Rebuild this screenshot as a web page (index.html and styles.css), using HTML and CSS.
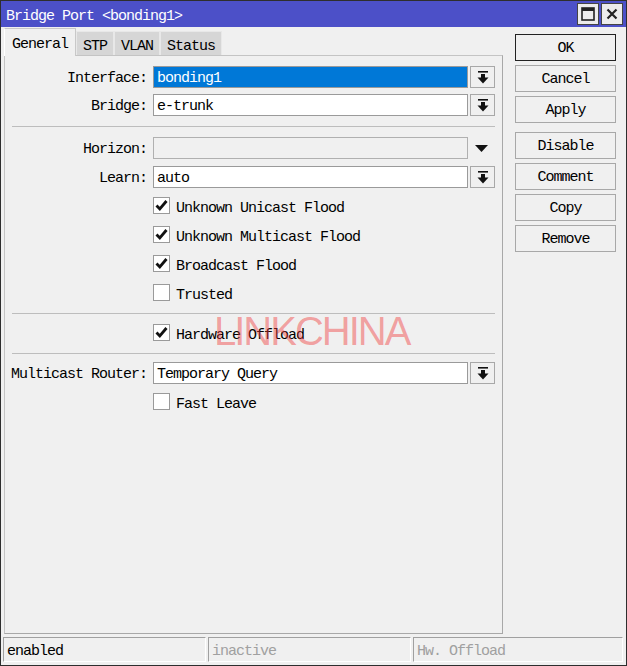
FILE: index.html
```html
<!DOCTYPE html>
<html>
<head>
<meta charset="utf-8">
<link rel="stylesheet" href="styles.css">
</head>
<body>
<div class="window">
  <div class="titlebar">
    <span class="title">Bridge Port &lt;bonding1&gt;</span>
    <div class="tbtns">
      <div class="tbtn"><svg width="14" height="14" viewBox="0 0 14 14"><rect x="1" y="1" width="12" height="12" fill="none" stroke="#222" stroke-width="1.6"/><rect x="1" y="1" width="12" height="3" fill="#222"/></svg></div>
      <div class="tbtn"><svg width="12" height="12" viewBox="0 0 12 12"><path d="M1.5 1.5L10.5 10.5M10.5 1.5L1.5 10.5" stroke="#222" stroke-width="2.2"/></svg></div>
    </div>
  </div>
  <div class="main">
    <div class="left">
      <div class="tabs">
        <div class="tab active">General</div>
        <div class="tab">STP</div>
        <div class="tab">VLAN</div>
        <div class="tab">Status</div>
      </div>
      <div class="panel">
        <div class="row r-interface">
          <div class="label">Interface:</div>
          <div class="field selected">bonding1</div>
          <div class="dd"><svg width="12" height="13" viewBox="0 0 12 13"><rect x="1" y="0" width="10" height="1.6" fill="#111"/><rect x="4" y="3" width="4" height="4" fill="#111"/><path d="M0.5 6.5H11.5L6 12.5Z" fill="#111"/></svg></div>
        </div>
        <div class="row r-bridge">
          <div class="label">Bridge:</div>
          <div class="field">e-trunk</div>
          <div class="dd"><svg width="12" height="13" viewBox="0 0 12 13"><rect x="1" y="0" width="10" height="1.6" fill="#111"/><rect x="4" y="3" width="4" height="4" fill="#111"/><path d="M0.5 6.5H11.5L6 12.5Z" fill="#111"/></svg></div>
        </div>
        <div class="sep s1"></div>
        <div class="row r-horizon">
          <div class="label">Horizon:</div>
          <div class="field disabled"></div>
          <div class="tri"><svg width="13" height="7" viewBox="0 0 13 7"><path d="M0 0H13L6.5 7Z" fill="#111"/></svg></div>
        </div>
        <div class="row r-learn">
          <div class="label">Learn:</div>
          <div class="field">auto</div>
          <div class="dd"><svg width="12" height="13" viewBox="0 0 12 13"><rect x="1" y="0" width="10" height="1.6" fill="#111"/><rect x="4" y="3" width="4" height="4" fill="#111"/><path d="M0.5 6.5H11.5L6 12.5Z" fill="#111"/></svg></div>
        </div>
        <div class="row cbrow c1">
          <div class="label"></div>
          <div class="cb"><svg width="15" height="15" viewBox="0 0 15 15"><path d="M2.5 7.5L5.8 11L12.5 3" fill="none" stroke="#111" stroke-width="2.8"/></svg></div>
          <span class="cbl">Unknown Unicast Flood</span>
        </div>
        <div class="row cbrow c2">
          <div class="label"></div>
          <div class="cb"><svg width="15" height="15" viewBox="0 0 15 15"><path d="M2.5 7.5L5.8 11L12.5 3" fill="none" stroke="#111" stroke-width="2.8"/></svg></div>
          <span class="cbl">Unknown Multicast Flood</span>
        </div>
        <div class="row cbrow c3">
          <div class="label"></div>
          <div class="cb"><svg width="15" height="15" viewBox="0 0 15 15"><path d="M2.5 7.5L5.8 11L12.5 3" fill="none" stroke="#111" stroke-width="2.8"/></svg></div>
          <span class="cbl">Broadcast Flood</span>
        </div>
        <div class="row cbrow c4">
          <div class="label"></div>
          <div class="cb"></div>
          <span class="cbl">Trusted</span>
        </div>
        <div class="sep s2"></div>
        <div class="row cbrow c5">
          <div class="label"></div>
          <div class="cb"><svg width="15" height="15" viewBox="0 0 15 15"><path d="M2.5 7.5L5.8 11L12.5 3" fill="none" stroke="#111" stroke-width="2.8"/></svg></div>
          <span class="cbl">Hardware Offload</span>
        </div>
        <div class="sep s3"></div>
        <div class="row r-mr">
          <div class="label">Multicast Router:</div>
          <div class="field">Temporary Query</div>
          <div class="dd"><svg width="12" height="13" viewBox="0 0 12 13"><rect x="1" y="0" width="10" height="1.6" fill="#111"/><rect x="4" y="3" width="4" height="4" fill="#111"/><path d="M0.5 6.5H11.5L6 12.5Z" fill="#111"/></svg></div>
        </div>
        <div class="row cbrow c6">
          <div class="label"></div>
          <div class="cb"></div>
          <span class="cbl">Fast Leave</span>
        </div>
        <div class="watermark">LINKCHINA</div>
      </div>
    </div>
    <div class="actions">
      <div class="btn default">OK</div>
      <div class="btn">Cancel</div>
      <div class="btn">Apply</div>
      <div class="btn gap">Disable</div>
      <div class="btn">Comment</div>
      <div class="btn">Copy</div>
      <div class="btn">Remove</div>
    </div>
  </div>
  <div class="statusbar">
    <div class="cell">enabled</div>
    <div class="cell dim">inactive</div>
    <div class="cell dim">Hw. Offload</div>
  </div>
</div>
</body>
</html>
```

FILE: styles.css
```css
* { box-sizing: border-box; }
html, body { margin: 0; padding: 0; background: #f0f0f0; }
body {
  font-family: "Liberation Mono", monospace;
  font-size: 15px;
  letter-spacing: -1px;
  color: #000;
}
.window {
  width: 627px;
  height: 666px;
  border: 1px solid #2e2e2e;
  display: flex;
  flex-direction: column;
  background: #f0f0f0;
}
.titlebar {
  height: 26px;
  flex: none;
  background: #4c50c8;
  display: flex;
  align-items: center;
  padding-left: 5px;
}
.title { color: #fff; flex: 1; padding-top: 5px; }
.tbtns { display: flex; gap: 2px; margin-right: 3px; }
.tbtn {
  width: 22px; height: 22px;
  background: #ececec;
  border: 1px solid #444;
  display: flex; align-items: center; justify-content: center;
}
.main {
  flex: 1;
  display: flex;
  padding: 1px 0 0 3px;
  gap: 12px;
}
.left { width: 499px; display: flex; flex-direction: column; }
.tabs { display: flex; align-items: flex-end; height: 27px; flex: none; }
.tab {
  height: 24px;
  padding: 5px 6px 0;
  background: #d6d6d6;
  border: 1px solid #e8e8e8;
  border-bottom: none;
  display: flex; align-items: center;
}
.tab.active {
  height: 28px;
  margin-bottom: -1px;
  padding: 4px 7px 0;
  background: #f0f0f0;
  border: 1px solid #c8c8c8;
  border-left-color: #fff;
  border-bottom: none;
  position: relative;
  z-index: 1;
}
.panel {
  position: relative;
  height: 579px;
  border: 1px solid #a8a8a8;
  border-top-color: #c4c4c4;
  border-left-color: #c4c4c4;
}
.row { display: flex; align-items: center; height: 22px; }
.label { width: 142px; text-align: right; margin-right: 6px; flex: none; white-space: nowrap; padding-top: 2px; }
.field {
  width: 315px; height: 22px;
  border: 1px solid #9a9a9a;
  background: #fff;
  padding: 2px 0 0 3px;
  display: flex; align-items: center;
}
.field.selected { background: #0078d7; color: #fff; }
.field.disabled { background: #f0f0f0; border-color: #b0b0b0; }
.dd {
  width: 25px; height: 22px; margin-left: 2px;
  border: 1px solid #a8a8a8;
  background: #f0f0f0;
  display: flex; align-items: center; justify-content: center;
}
.tri { width: 25px; margin-left: 2px; display: flex; justify-content: center; align-items: center; padding-right: 2px; }
.r-interface { margin-top: 10px; }
.r-bridge { margin-top: 6px; }
.sep { height: 1px; background: #bdbdbd; margin-left: 7px; width: 483px; }
.s1 { margin-top: 10px; }
.r-horizon { margin-top: 10px; }
.r-learn { margin-top: 7px; }
.cbrow { height: 17px; }
.c1 { margin-top: 9px; }
.c2, .c3, .c4 { margin-top: 12px; }
.s2 { margin-top: 12px; }
.c5 { margin-top: 10px; }
.s3 { margin-top: 12px; }
.r-mr { margin-top: 8px; }
.c6 { margin-top: 9px; }
.cb {
  width: 17px; height: 17px;
  border: 1px solid #9a9a9a;
  background: #fff;
  display: flex; align-items: center; justify-content: center;
  flex: none;
}
.cbl { margin-left: 6px; padding-top: 5px; }
.watermark {
  position: absolute;
  left: 209px;
  top: 255px;
  font-family: "Liberation Sans", Arial, sans-serif;
  font-size: 40px;
  line-height: 40px;
  letter-spacing: -2px;
  color: rgba(240, 60, 60, 0.45);
}
.actions { width: 101px; display: flex; flex-direction: column; gap: 4px; padding-top: 6px; }
.btn {
  height: 27px;
  border: 1px solid #a8a8a8;
  background: #f0f0f0;
  display: flex; align-items: center; justify-content: center;
  padding-top: 2px;
}
.btn.default { border-color: #222; }
.btn.gap { margin-top: 5px; }
.statusbar {
  flex: none;
  height: 25px;
  margin: 2px 3px 3px 2px;
  display: grid;
  grid-template-columns: 203px 203px 1fr;
  gap: 2px;
}
.cell {
  border: 1px solid #fff;
  border-top-color: #a0a0a0;
  border-left-color: #a0a0a0;
  padding: 3px 0 0 3px;
  display: flex; align-items: center;
}
.cell.dim { color: #a0a0a0; }
```
